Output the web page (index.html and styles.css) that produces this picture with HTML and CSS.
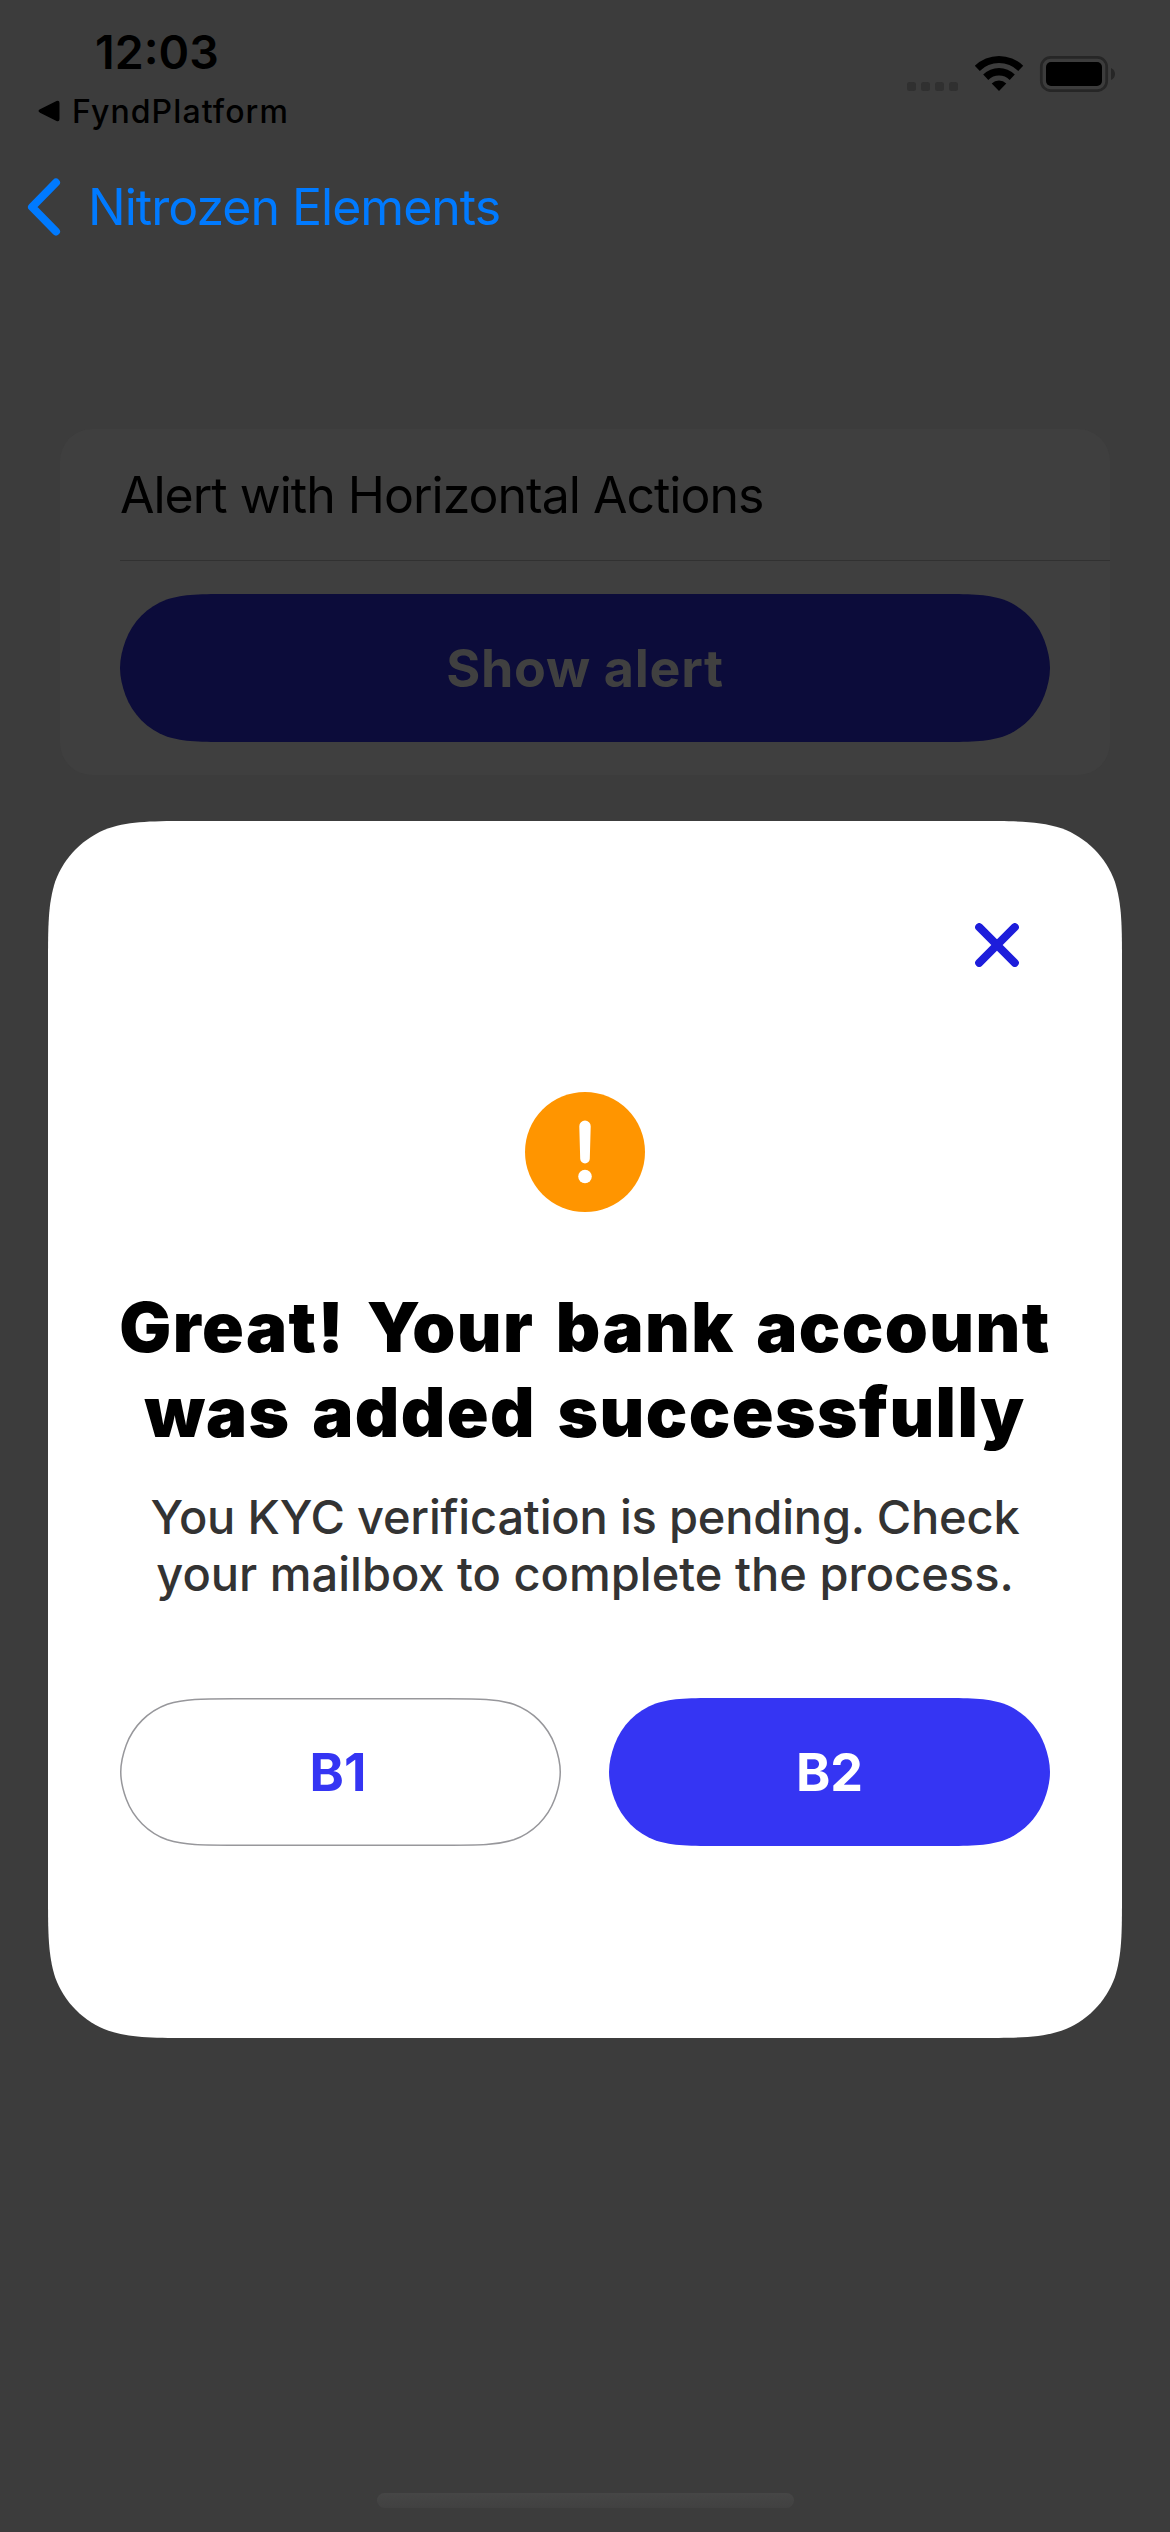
FILE: index.html
```html
<!DOCTYPE html>
<html lang="en">
<head>
<meta charset="utf-8">
<title>Nitrozen Elements</title>
<link rel="stylesheet" href="styles.css">
</head>
<body>
<div class="screen">
  <header class="status">
    <div class="status-left">
      <div class="time">12:03</div>
      <div class="return-app">
        <svg width="22" height="22" viewBox="0 0 22 22"><path d="M2 9.3 18.5 1Q21.5 0 21.5 3v16q0 3-3 2L2 12.7Q-1 11 2 9.3z"/></svg>
        <span>FyndPlatform</span>
      </div>
    </div>
    <svg class="status-icons" width="210" height="38" viewBox="906 54 210 38">
      <g fill="#303030"><rect x="907" y="82" width="9" height="9" rx="2.5"/><rect x="921" y="82" width="9" height="9" rx="2.5"/><rect x="935" y="82" width="9" height="9" rx="2.5"/><rect x="949" y="82" width="9" height="9" rx="2.5"/></g>
      <path d="M974.8 65.8a34.5 34.5 0 0 1 48.4 0l-5 5.1a27.3 27.3 0 0 0-38.4 0zM983.2 74.6a22.3 22.3 0 0 1 31.6 0l-5.1 5.3a15.2 15.2 0 0 0-21.4 0zM991.7 83.4a10.6 10.6 0 0 1 14.6 0l-7.3 7.6z"/>
      <rect x="1041.3" y="57.3" width="65.4" height="33.4" rx="9.5" fill="none" stroke="#262626" stroke-width="2.7"/>
      <rect x="1046" y="62" width="56" height="24" rx="5"/>
      <path d="M1111 68q4 2 4 6t-4 6z" fill="#262626"/>
    </svg>
  </header>
  <nav class="nav">
    <svg width="34" height="58" viewBox="0 0 34 58"><path d="M29 4.5 5 29l24 24.5" fill="none" stroke="#007aff" stroke-width="8" stroke-linecap="round" stroke-linejoin="round"/></svg>
    <span class="nav-title">Nitrozen Elements</span>
  </nav>
  <section class="card">
    <div class="row-title"><span>Alert with Horizontal Actions</span></div>
    <div class="row-action">
      <div class="button show">
        <svg class="shape" viewBox="0 0 930 148"><path fill="#0c0c3a" d="M113 0H817C849.5 0 865.7 0 883.3 5.5C902.4 12.5 917.5 27.6 924.5 46.7C927.6 55.2 930 64.4 930 74S927.6 92.8 924.5 101.3C917.5 120.4 902.4 135.5 883.3 142.5C865.7 148 849.5 148 817 148H113C80.5 148 64.3 148 46.7 142.5C27.6 135.5 12.5 120.4 5.5 101.3C2.4 92.8 0 83.6 0 74S2.4 55.2 5.5 46.7C12.5 27.6 27.6 12.5 46.7 5.5C64.3 0 80.5 0 113 0z"/></svg>
        <span>Show alert</span>
      </div>
    </div>
  </section>
  <main class="dialog">
    <svg class="shape" viewBox="0 0 1074 1217"><path fill="#fff" d="M146.8 0H927.2C969.5 0 990.6 0 1013.4 7.2C1038.2 16.2 1057.8 35.8 1066.8 60.6C1074 83.4 1074 104.5 1074 146.8V1070.2C1074 1112.5 1074 1133.6 1066.8 1156.4C1057.8 1181.2 1038.2 1200.8 1013.4 1209.8C990.6 1217 969.5 1217 927.2 1217H146.8C104.5 1217 83.4 1217 60.6 1209.8C35.8 1200.8 16.2 1181.2 7.2 1156.4C0 1133.6 0 1112.5 0 1070.2V146.8C0 104.5 0 83.4 7.2 60.6C16.2 35.8 35.8 16.2 60.6 7.2C83.4 0 104.5 0 146.8 0z"/></svg>
    <svg class="close" width="44" height="44" viewBox="0 0 44 44"><path d="M4.2 4.2l35.6 35.6M39.8 4.2 4.2 39.8" fill="none" stroke="#1d1ddb" stroke-width="8" stroke-linecap="round"/></svg>
    <svg class="warning" width="120" height="120" viewBox="0 0 120 120"><circle cx="60" cy="60" r="60" fill="#ff9500"/><path fill="#fff" d="M54.3 34.3a5.7 5.7 0 0 1 11.4 0l-.9 32.4a4.8 4.8 0 0 1-9.6 0z"/><circle cx="60" cy="84.5" r="6.8" fill="#fff"/></svg>
    <h1 class="title"><span>Great! Your bank account</span><span>was added successfully</span></h1>
    <p class="message"><span class="tight">You KYC verification is pending. Check</span><span>your mailbox to complete the process.</span></p>
    <div class="actions">
      <div class="button b1">
        <svg class="shape" viewBox="0 0 441 148"><path transform="translate(.75 .75) scale(.9966 .9899)" vector-effect="non-scaling-stroke" fill="#fff" stroke="#97979b" stroke-width="1.5" d="M113 0H328C360.5 0 376.7 0 394.3 5.5C413.4 12.5 428.5 27.6 435.5 46.7C438.6 55.2 441 64.4 441 74S438.6 92.8 435.5 101.3C428.5 120.4 413.4 135.5 394.3 142.5C376.7 148 360.5 148 328 148H113C80.5 148 64.3 148 46.7 142.5C27.6 135.5 12.5 120.4 5.5 101.3C2.4 92.8 0 83.6 0 74S2.4 55.2 5.5 46.7C12.5 27.6 27.6 12.5 46.7 5.5C64.3 0 80.5 0 113 0z"/></svg>
        <span>B1</span>
      </div>
      <div class="button b2">
        <svg class="shape" viewBox="0 0 441 148"><path fill="#3535f3" d="M113 0H328C360.5 0 376.7 0 394.3 5.5C413.4 12.5 428.5 27.6 435.5 46.7C438.6 55.2 441 64.4 441 74S438.6 92.8 435.5 101.3C428.5 120.4 413.4 135.5 394.3 142.5C376.7 148 360.5 148 328 148H113C80.5 148 64.3 148 46.7 142.5C27.6 135.5 12.5 120.4 5.5 101.3C2.4 92.8 0 83.6 0 74S2.4 55.2 5.5 46.7C12.5 27.6 27.6 12.5 46.7 5.5C64.3 0 80.5 0 113 0z"/></svg>
        <span>B2</span>
      </div>
    </div>
  </main>
  <div class="home"></div>
</div>
</body>
</html>
```
FILE: styles.css
```css
* { box-sizing: border-box; }
body { margin: 0; background: #3c3c3c; font-family: Inter, "Liberation Sans", sans-serif; color: #000; }
svg { display: block; flex: none; }
span, .time { white-space: nowrap; }
.screen { width: 1170px; height: 2532px; display: flex; flex-direction: column; overflow: hidden; }

.status { height: 150px; display: flex; justify-content: space-between; padding: 0 54px 0 38px; }
.status-left { padding-top: 23px; }
.time { padding-left: 57px; height: 58px; line-height: 58px; font-size: 46.5px; font-weight: 600; }
.return-app { display: flex; align-items: center; gap: 12px; height: 60px; font-size: 32px; font-weight: 450; letter-spacing: 1.1px; }
.status-icons { margin-top: 54px; }

.nav { height: 114px; display: flex; align-items: center; gap: 27px; padding-left: 27px; color: #007aff; }
.nav-title { font-size: 50px; letter-spacing: -1px; }

.card { margin: 165px 60px 0; height: 346px; background: #3f3f3f; border-radius: 32px; padding-left: 60px; }
.row-title { height: 132px; display: flex; align-items: center; border-bottom: 1px solid #313131; font-size: 50px; letter-spacing: -1px; }
.row-action { padding: 33px 60px 0 0; }

.button { position: relative; height: 148px; display: flex; align-items: center; justify-content: center; font-size: 52px; font-weight: 700; }
.shape { position: absolute; inset: 0; width: 100%; height: 100%; }
.button span { position: relative; }
.show { color: #404040; letter-spacing: 0.7px; }

.dialog { position: relative; margin: 46px 48px 0; height: 1217px; padding: 0 72px; display: flex; flex-direction: column; align-items: center; }
.close { position: relative; align-self: flex-end; margin: 102px 31px 0 0; }
.warning { position: relative; margin-top: 125px; }
.title { position: relative; margin: 73px 0 0; display: flex; flex-direction: column; align-items: center; font-size: 69px; line-height: 85px; font-weight: 900; letter-spacing: 1.4px; word-spacing: 6.5px; }
.message { position: relative; margin: 33px 0 0; display: flex; flex-direction: column; align-items: center; font-size: 47px; line-height: 57px; font-weight: 500; color: #333; }
.tight { letter-spacing: -0.2px; }
.actions { align-self: stretch; margin-top: 96px; display: grid; grid-template-columns: 1fr 1fr; gap: 48px; }
.b1 { color: #3535f3; padding-right: 5px; }
.b2 { color: #fff; }

.home { width: 417px; height: 15px; margin: 455px 0 0 377px; border-radius: 8px; background: linear-gradient(#464646, #414141); }
```
